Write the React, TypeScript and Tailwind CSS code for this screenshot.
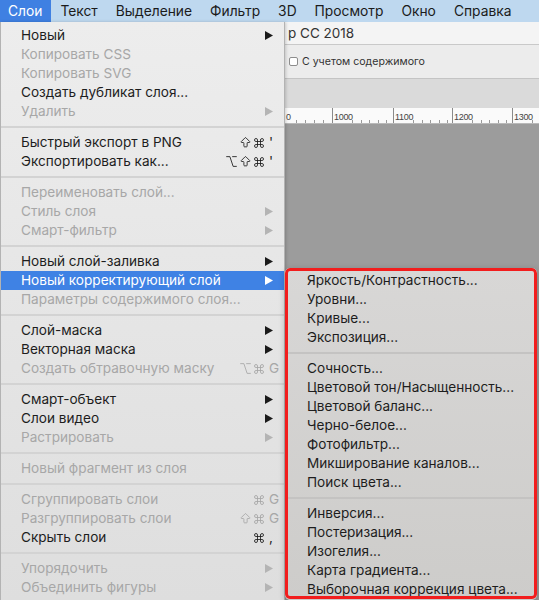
import React from "react";
import { ArrowBigUp, Command, Option } from "lucide-react";

type Item = {
  label: string;
  off?: boolean;
  sub?: boolean;
  mods?: string;
  keyc?: string;
  active?: boolean;
} | null;

const layerMenu: Item[] = [
  { label: "Новый", sub: true },
  { label: "Копировать CSS", off: true },
  { label: "Копировать SVG", off: true },
  { label: "Создать дубликат слоя..." },
  { label: "Удалить", off: true, sub: true },
  null,
  { label: "Быстрый экспорт в PNG", mods: "⇧⌘", keyc: "'" },
  { label: "Экспортировать как...", mods: "⌥⇧⌘", keyc: "'" },
  null,
  { label: "Переименовать слой...", off: true },
  { label: "Стиль слоя", off: true, sub: true },
  { label: "Смарт-фильтр", off: true, sub: true },
  null,
  { label: "Новый слой-заливка", sub: true },
  { label: "Новый корректирующий слой", sub: true, active: true },
  { label: "Параметры содержимого слоя...", off: true },
  null,
  { label: "Слой-маска", sub: true },
  { label: "Векторная маска", sub: true },
  { label: "Создать обтравочную маску", off: true, mods: "⌥⌘", keyc: "G" },
  null,
  { label: "Смарт-объект", sub: true },
  { label: "Слои видео", sub: true },
  { label: "Растрировать", off: true, sub: true },
  null,
  { label: "Новый фрагмент из слоя", off: true },
  null,
  { label: "Сгруппировать слои", off: true, mods: "⌘", keyc: "G" },
  { label: "Разгруппировать слои", off: true, mods: "⇧⌘", keyc: "G" },
  { label: "Скрыть слои", mods: "⌘", keyc: "," },
  null,
  { label: "Упорядочить", off: true, sub: true },
  { label: "Объединить фигуры", off: true, sub: true },
];

const adjustMenu: (string | null)[] = [
  "Яркость/Контрастность...",
  "Уровни...",
  "Кривые...",
  "Экспозиция...",
  null,
  "Сочность...",
  "Цветовой тон/Насыщенность...",
  "Цветовой баланс...",
  "Черно-белое...",
  "Фотофильтр...",
  "Микширование каналов...",
  "Поиск цвета...",
  null,
  "Инверсия...",
  "Постеризация...",
  "Изогелия...",
  "Карта градиента...",
  "Выборочная коррекция цвета...",
];

const topMenu = ["Слои", "Текст", "Выделение", "Фильтр", "3D", "Просмотр", "Окно", "Справка"];

const rulerMarks = [
  { x: 47, label: "1000" },
  { x: 108, label: "1100" },
  { x: 167, label: "1200" },
  { x: 227, label: "1300" },
];

function Arrow({ color }: { color: string }) {
  return (
    <svg width="8" height="9" viewBox="0 0 8 9" className={color}>
      <polygon points="0,0 8,4.5 0,9" fill="currentColor" />
    </svg>
  );
}

function ModKey({ k }: { k: string }) {
  if (k === "⇧") return <ArrowBigUp size={13} strokeWidth={1.6} />;
  if (k === "⌥") return <Option size={13} strokeWidth={1.6} />;
  return <Command size={12} strokeWidth={1.7} />;
}

function MenuRow({ item }: { item: NonNullable<Item> }) {
  const tone = item.active
    ? "bg-[#3f82e4] text-white"
    : item.off
    ? "text-[#a7a7a7]"
    : "text-[#1d1d1d]";
  const arrowTone = item.active ? "text-white" : item.off ? "text-[#b4b4b4]" : "text-[#1a1a1a]";
  return (
    <div className={`flex h-[19px] items-center pl-[20px] pr-[7px] ${tone}`}>
      <span className="flex-1 whitespace-nowrap">{item.label}</span>
      {item.mods && (
        <span className="flex items-center">
          <span className="flex items-center gap-[1px]">
            {item.mods.split("").map((k, i) => (
              <ModKey key={i} k={k} />
            ))}
          </span>
          <span className="w-[12px] pl-[4px]">{item.keyc}</span>
        </span>
      )}
      {item.sub && (
        <span className="flex w-[12px] items-center">
          <Arrow color={arrowTone} />
        </span>
      )}
    </div>
  );
}

export default function App() {
  return (
    <div className="relative flex h-[600px] w-[539px] flex-col overflow-hidden bg-[#9c9c9c] font-['Inter',sans-serif] text-[13.6px]">
      {/* menu bar */}
      <div className="flex h-[22px] shrink-0 items-center bg-[#bed8ef] text-[13.8px] text-[#1b1b1b]">
        {topMenu.map((m, i) => (
          <div
            key={m}
            className={`flex h-full items-center ${i === 0 ? "bg-[#3f80e2] pl-[8px] pr-[9px] text-white" : "px-[9px]"}`}
          >
            {m}
          </div>
        ))}
      </div>

      {/* photoshop window behind the menus */}
      <div className="flex flex-1 flex-col">
        <div className="flex h-[23px] items-center border-b border-[#c9c9c9] bg-[#f4f4f4] pl-[288px] text-[13.5px] text-[#333]">
          p CC 2018
        </div>
        <div className="flex h-[34px] items-center gap-[4px] border-b border-[#c4c4c4] bg-[#ececec] pl-[289px] text-[10.6px] text-[#333]">
          <span className="h-[9px] w-[9px] rounded-[2px] border border-[#8d8d8d] bg-white" />
          <span>С учетом содержимого</span>
        </div>
        <div className="h-[29px] bg-[#dadada]" />
        <div className="relative h-[16px] border-b border-[#b9b9b9] bg-[#fafafa] pl-[285px] font-['Liberation_Sans',Arial,sans-serif] text-[9px] text-[#444]">
          <div className="relative h-full">
            <span className="absolute left-[1px] top-[3px]">0</span>
            {rulerMarks.map((r) => (
              <div key={r.label}>
                <div className="absolute top-0 h-full w-px bg-[#8a8a8a]" style={{ left: r.x }} />
                <span className="absolute top-[3px] tracking-[-0.3px]" style={{ left: r.x + 2 }}>
                  {r.label}
                </span>
                {[20, 28.5, 37, 45.5, 54].map((d) => (
                  <div
                    key={d}
                    className="absolute bottom-0 h-[3px] w-px bg-[#9a9a9a]"
                    style={{ left: r.x + d }}
                  />
                ))}
              </div>
            ))}
            {[11, 20, 29, 38].map((d) => (
              <div key={d} className="absolute bottom-0 h-[3px] w-px bg-[#9a9a9a]" style={{ left: d }} />
            ))}
          </div>
        </div>
        <div className="flex-1 bg-[#9c9c9c]" />
      </div>

      {/* Слои menu */}
      <div className="absolute bottom-0 left-0 top-[22px] w-[285px] border-l border-r border-[#b3b3b3] bg-gradient-to-b from-[#ededed] to-[#dedede] pt-[4px] shadow-[1px_0_3px_rgba(0,0,0,0.18)]">
        {layerMenu.map((item, i) =>
          item ? (
            <MenuRow key={i} item={item} />
          ) : (
            <div key={i} className="flex h-[12px] items-center">
              <div className="h-[2px] w-full bg-[#d3d3d3]" />
            </div>
          )
        )}
      </div>

      {/* adjustment layer submenu */}
      <div className="absolute left-[285px] top-[268px] h-[332px] w-[252px] overflow-hidden rounded-[5px] bg-gradient-to-b from-[#d8d7d6] to-[#cdccca] pt-[3px] text-[#1d1d1d] shadow-[0_2px_6px_rgba(0,0,0,0.25)]">
        {adjustMenu.map((label, i) =>
          label ? (
            <div key={i} className="flex h-[19px] items-center whitespace-nowrap pl-[22px]">
              {label}
            </div>
          ) : (
            <div key={i} className="flex h-[12px] items-center">
              <div className="h-[2px] w-full bg-[#c4c3c2]" />
            </div>
          )
        )}
        <div className="pointer-events-none absolute inset-x-0 top-0 h-[331px] rounded-[5px] border-[3px] border-[#f21d1d]" />
      </div>
    </div>
  );
}
